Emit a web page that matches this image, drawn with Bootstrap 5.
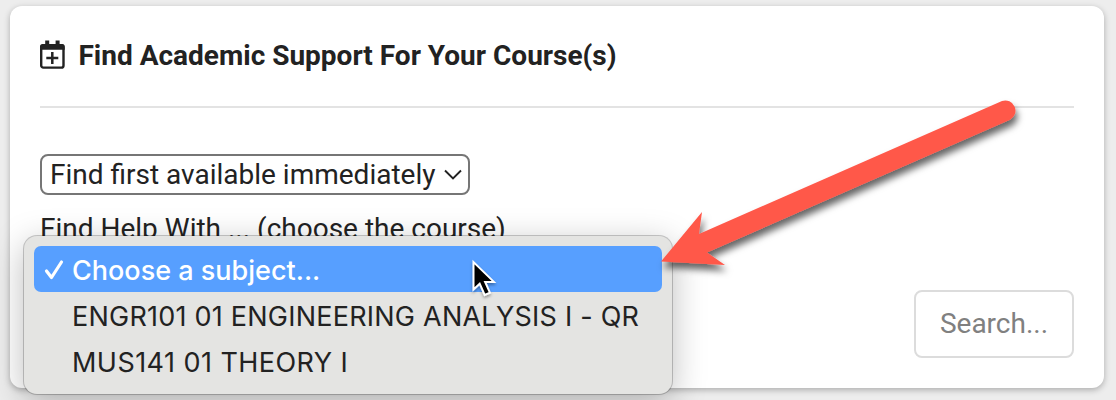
<!DOCTYPE html>
<html lang="en">
<head>
<meta charset="utf-8">
<meta name="viewport" content="width=device-width, initial-scale=1">
<title>Find Academic Support</title>
<link href="https://cdn.jsdelivr.net/npm/bootstrap@5.3.0/dist/css/bootstrap.min.css" rel="stylesheet">
<style>
  body { background: #ededed; font-family: Roboto, "Liberation Sans", sans-serif; font-size: 28px; line-height: 34px; color: #222; height: 400px; }
  .support-card { width: 1094px; height: 382px; margin: 6px 0 0 10px; padding: 0 30px; border-radius: 12px; box-shadow: 0 2px 6px rgba(0,0,0,.28); }
  .support-head { height: 102px; border-bottom: 2px solid #e3e3e3; gap: 12.5px; }
  .support-head svg { margin-bottom: 2px; }
  .support-head h1 { font-size: 28px; line-height: 34px; font-weight: 700; }
  .when-select { width: 430px; height: 41px; margin-top: 46px; padding: 0 6px 0 8px; border: 2px solid #767676; border-radius: 8px; }
  .course-label { margin-top: 17px; }
  .search-btn { width: 160px; height: 68px; margin-top: 44px; border: 2px solid #dcdcdc; border-radius: 8px; color: #808080; font-size: 28px; background: #fff; }
  .subject-menu { left: 24px; top: 236px; width: 648px; height: 158px; padding: 10px; border-radius: 13px; background: #e4e4e2; box-shadow: 0 0 0 1px rgba(0,0,0,.2), 0 8px 34px rgba(0,0,0,.27); font-family: Inter, "Liberation Sans", sans-serif; font-size: 27px; z-index: 2; }
  .subject-item { height: 46px; padding: 3px 0 0 38px; border-radius: 7px; white-space: nowrap; letter-spacing: .23px; }
  .subject-item:last-child { letter-spacing: .45px; }
  .subject-item.chosen { background: #579fff; color: #fff; padding-left: 10px; font-weight: 500; letter-spacing: 0; }
  .tick { width: 28px; height: 28px; }
  .annotation { left: 0; top: 0; z-index: 3; pointer-events: none; }
</style>
</head>
<body class="position-relative overflow-hidden">
<main class="support-card bg-white d-flex flex-column">
  <header class="support-head d-flex align-items-center flex-shrink-0">
    <svg width="26" height="30" viewBox="0 0 26 30" aria-hidden="true">
      <path d="M7.200 .600v5M17.600 .600v5" stroke="#222" stroke-width="4" fill="none"/>
      <rect x="1.200" y="5.500" width="22.300" height="22.100" rx="2.200" fill="none" stroke="#222" stroke-width="2.400"/>
      <path d="M0 9.800V6.500Q0 4 2.500 4H22.200Q24.700 4 24.700 6.500V9.800z" fill="#222"/>
      <path d="M12.300 12v12M6.300 18h12" stroke="#222" stroke-width="2.500"/>
    </svg>
    <h1 class="m-0">Find Academic Support For Your Course(s)</h1>
  </header>
  <div class="when-select d-flex align-items-center justify-content-between flex-shrink-0">
    <span>Find first available immediately</span>
    <svg width="18" height="12" viewBox="0 0 18 12"><path d="M1 1.500l8 8 8-8" fill="none" stroke="#222" stroke-width="1.900"/></svg>
  </div>
  <div class="course-label">Find Help With ... (choose the course)</div>
  <button class="search-btn align-self-end p-0 flex-shrink-0" type="button">Search...</button>
</main>
<div class="subject-menu position-absolute" role="listbox">
  <div class="subject-item chosen d-flex align-items-center" role="option" aria-selected="true">
    <svg class="tick" viewBox="0 0 28 28"><path d="M2.500 14l5 6.500L17.500 5" fill="none" stroke="#fff" stroke-width="3.200" stroke-linecap="round" stroke-linejoin="round"/></svg>
    <span>Choose a subject...</span>
  </div>
  <div class="subject-item d-flex align-items-center" role="option"><span>ENGR101 01 ENGINEERING ANALYSIS I - QR</span></div>
  <div class="subject-item d-flex align-items-center" role="option"><span>MUS141 01 THEORY I</span></div>
</div>
<svg class="annotation position-absolute" width="1116" height="400" viewBox="0 0 1116 400" aria-hidden="true">
  <defs>
    <filter id="arrowShade" x="-10%" y="-10%" width="120%" height="130%"><feDropShadow dx="2" dy="6" stdDeviation="3.500" flood-color="#000" flood-opacity=".6"/></filter>
    <filter id="cursorShade" x="-30%" y="-30%" width="170%" height="170%"><feDropShadow dx="0" dy="2" stdDeviation="1.500" flood-color="#000" flood-opacity=".35"/></filter>
  </defs>
  <path filter="url(#arrowShade)" fill="#ff584a" d="M661 261.500L702 212L699 234L1002 101A10.200 10.200 0 0 1 1010 119.700L707 252.500L725 265z"/>
  <path filter="url(#cursorShade)" fill="#000" stroke="#fff" stroke-width="2" d="M473.500 262v27.500l6.200-5.800 5 11.200 5.200-2.200-4.800-10.800h8.800z"/>
</svg>
<script src="https://cdn.jsdelivr.net/npm/bootstrap@5.3.0/dist/js/bootstrap.bundle.min.js"></script>
</body>
</html>
